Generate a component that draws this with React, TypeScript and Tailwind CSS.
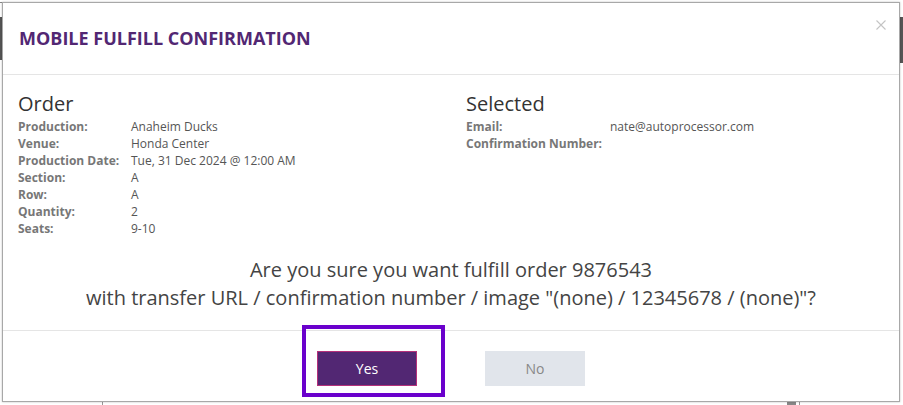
import React from "react";

const font = { fontFamily: '"Open Sans", "Noto Sans", sans-serif' };

function Row({ label, value, w }: { label: string; value?: string; w: string }) {
  return (
    <div className="flex h-[17px] items-center text-[12px] leading-[17px]">
      <div className={`${w} shrink-0 font-bold text-[#777]`}>{label}</div>
      <div className="text-[#555]">{value}</div>
    </div>
  );
}

export default function App() {
  return (
    <div className="relative h-[405px] w-[903px] overflow-hidden bg-white" style={font}>
      {/* page behind the modal */}
      <div className="absolute left-0 top-[17px] h-[43px] w-[2px] bg-[#555]" />
      <div className="absolute right-0 top-[17px] h-[46px] w-[3px] bg-[#555]" />
      <div className="absolute left-0 top-[2px] h-[1px] w-[100px] bg-[#888]" />
      <div className="absolute left-[102px] top-[401px] h-[4px] w-[1px] bg-[#999]" />
      <div className="absolute left-[787px] top-[401px] h-[4px] w-[9px] bg-[#888]" />
      <div className="absolute left-[799px] top-[401px] h-[4px] w-[1px] bg-[#999]" />

      <div className="pl-[2px] pt-[2px]">
        <div className="relative flex h-[400px] w-[898px] flex-col border border-[#a8a8a8] bg-white shadow-[0_0_2px_rgba(0,0,0,0.25)]">
          {/* header */}
          <div className="flex h-[72px] shrink-0 items-center border-b border-[#e5e5e5] pl-[16px]">
            <h4 className="text-[18px] font-bold leading-[25px] text-[#522773]">
              MOBILE FULFILL CONFIRMATION
            </h4>
            <svg
              className="absolute left-[873px] top-[17px]"
              width="10"
              height="10"
              viewBox="0 0 10 10"
            >
              <path d="M0.5 0.5 L9.5 9.5 M9.5 0.5 L0.5 9.5" stroke="#c4c4c4" strokeWidth="1.1" />
            </svg>
          </div>

          {/* body */}
          <div className="flex grow flex-col pt-[16px]">
            <div className="flex">
              <div className="w-1/2 px-[15px]">
                <div className="mb-[2px] text-[20px] leading-[25px] text-[#333]">Order</div>
                <Row w="w-[113px]" label="Production:" value="Anaheim Ducks" />
                <Row w="w-[113px]" label="Venue:" value="Honda Center" />
                <Row w="w-[113px]" label="Production Date:" value="Tue, 31 Dec 2024 @ 12:00 AM" />
                <Row w="w-[113px]" label="Section:" value="A" />
                <Row w="w-[113px]" label="Row:" value="A" />
                <Row w="w-[113px]" label="Quantity:" value="2" />
                <Row w="w-[113px]" label="Seats:" value="9-10" />
              </div>
              <div className="w-1/2 px-[15px]">
                <div className="mb-[2px] text-[20px] leading-[25px] text-[#333]">Selected</div>
                <Row w="w-[144px]" label="Email:" value="nate@autoprocessor.com" />
                <Row w="w-[144px]" label="Confirmation Number:" />
              </div>
            </div>
            <div className="mt-[19px] text-center text-[20px] leading-[28px] text-[#444]">
              <div>Are you sure you want fulfill order 9876543</div>
              <div>
                with transfer URL / confirmation number / image "(none) / 12345678 / (none)"?
              </div>
            </div>
          </div>

          {/* footer */}
          <div className="flex h-[71px] shrink-0 items-start justify-center gap-[68px] border-t border-[#e5e5e5] pt-[20px]">
            <div className="relative">
              <button className="h-[35px] w-[100px] border border-[#b5307a] bg-[#522773] text-[14px] text-white">
                Yes
              </button>
              <div className="pointer-events-none absolute left-[-15px] top-[-26px] h-[72px] w-[143px] border-[4px] border-[#6a00cc]" />
            </div>
            <button className="h-[35px] w-[100px] bg-[#e1e5eb] text-[14px] text-[#888]">No</button>
          </div>
        </div>
      </div>
    </div>
  );
}
